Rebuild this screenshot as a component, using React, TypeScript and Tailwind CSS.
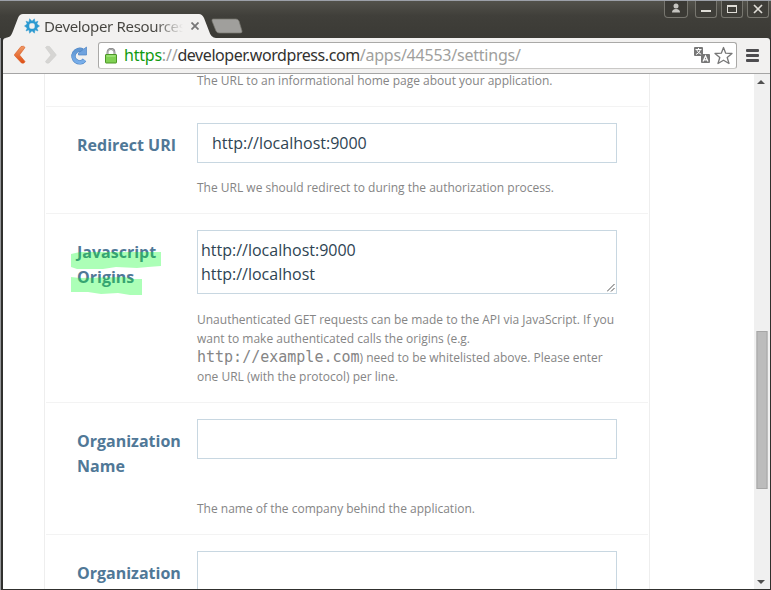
import type { ReactNode } from "react";

function WindowButton({ children }: { children: ReactNode }) {
  return (
    <div className="flex h-[17px] w-[22px] items-center justify-center rounded-b-[3px] border border-t-0 border-[#77766f] bg-[#3f3e39]">
      {children}
    </div>
  );
}

function TitleBar() {
  return (
    <header className="relative flex h-[38px] shrink-0 border-t border-[#9ca0a8] bg-linear-to-b from-[#53524b] via-[#403f3a] via-40% to-[#3b3a35]">
      <svg className="absolute left-0 top-0" width="250" height="37" viewBox="0 1 250 37">
        <path d="M3 38C10 38 11 36 13 31L18 18Q19.5 14 23 14H199Q202 14 204 18L209 31Q211 38 216 38Z" fill="#f2f1f0" />
        <path d="M213 19H236Q238 19 239 21L242 31Q242.500 33 240 33H219Q217 33 216 31L212 21Q211.500 19 213 19Z" fill="#a09f9c" stroke="#77766f" strokeWidth=".7" />
      </svg>
      <div className="relative mt-[12px] flex h-[25px] w-[212px] items-center pl-6">
        <svg className="shrink-0" width="16" height="16" viewBox="0 0 16 16">
          <path
            d="M8 3.200L10.400.8L11 4.200L14 3.200L12.800 6L15.500 8L12.800 10L14 13L11 11.800L10.400 15.200L8 12.800L5.600 15.200L5 11.800L2 13L3.200 10L.5 8L3.200 6L2 3.200L5 4.200L5.600.8Z"
            fill="#2c9ad1"
            stroke="#2c9ad1"
            strokeWidth=".5"
          />
          <rect x="5.300" y="5.300" width="5.400" height="5.400" rx="1.700" fill="#f2f1f0" />
        </svg>
        <span className="ml-[4px] w-[139px] overflow-hidden whitespace-nowrap bg-linear-to-r from-[#45443f] from-80% to-transparent bg-clip-text font-['Noto_Sans',sans-serif] text-[15px] leading-6 tracking-[-0.340px] text-transparent">
          Developer Resources
        </span>
        <svg className="ml-[8px] shrink-0" width="8" height="8" viewBox="0 0 8 8">
          <path d="M.5.5L7.500 7.500M7.500.5L.5 7.500" stroke="#777" strokeWidth="1.800" />
        </svg>
      </div>
      <div className="ml-auto mr-[2px] flex h-[17px]">
        <div className="mr-[7px] flex h-[17px] w-[24px] justify-center rounded-b-[4px] border border-t-0 border-[#77766f] bg-[#3b3a35]">
          <svg width="10" height="13" viewBox="0 0 10 13">
            <circle cx="5" cy="5" r="2.500" fill="#c5c4c0" />
            <path d="M1 11.500Q1 8 5 8T9 11.500Z" fill="#c5c4c0" />
          </svg>
        </div>
        <div className="flex gap-[4px]">
          <WindowButton>
            <div className="mt-[4px] h-[2px] w-[10px] bg-[#dfddd7]" />
          </WindowButton>
          <WindowButton>
            <div className="h-[8px] w-[10px] border border-t-2 border-[#dfddd7]" />
          </WindowButton>
          <WindowButton>
            <svg width="10" height="10" viewBox="0 0 10 10">
              <path d="M1 1L9 9M9 1L1 9" stroke="#dfddd7" strokeWidth="1.700" />
            </svg>
          </WindowButton>
        </div>
      </div>
    </header>
  );
}

function Toolbar() {
  return (
    <div className="ml-[3px] mr-px flex h-9 shrink-0 rounded-t-[3px] border-b border-[#a5a5a5] bg-[#f2f1f0]">
      <svg className="shrink-0" width="95" height="35" viewBox="3 38 95 35">
        <defs>
          <linearGradient id="orange" x1="0" y1="0" x2="0" y2="1">
            <stop stopColor="#ef9a66" />
            <stop offset="1" stopColor="#df4e14" />
          </linearGradient>
          <linearGradient id="blue" x1="0" y1="0" x2="0" y2="1">
            <stop stopColor="#6096d1" />
            <stop offset="1" stopColor="#78aeea" />
          </linearGradient>
        </defs>
        <path d="M21 46.500Q24 45.500 25 47.500L19.500 55L25 61.500Q24.500 64 21.500 63L14.500 55.500V54.500Z" fill="url(#orange)" stroke="#d9571d" strokeWidth=".6" />
        <path d="M49.500 46.500Q46.500 45.500 45.500 47.500L51 55L45.500 61.500Q46 64 49 63L56 55.500V54.500Z" fill="#d6d5d3" stroke="#c9c8c6" strokeWidth=".5" />
        <path d="M82.500 50.500A6.200 6.200 0 1 0 84.500 60" fill="none" stroke="#4d84c4" strokeWidth="4.500" />
        <path d="M82.500 50.500A6.200 6.200 0 1 0 84.500 60" fill="none" stroke="url(#blue)" strokeWidth="3.500" />
        <path d="M86.500 47V55H78.500V53Z" fill="#6fa3df" stroke="#4d84c4" strokeWidth=".7" />
      </svg>
      <div className="mt-[4px] flex h-[27px] w-[639px] items-center rounded-[3px] border border-[#aaa9a7] border-b-[#c9c8c6] bg-white">
        <svg className="ml-[6px] shrink-0" width="12" height="16" viewBox="0 0 12 16">
          <path d="M2.500 8V4.500Q2.500 1 6 1T9.500 4.500V8" fill="none" stroke="#777" strokeWidth="1.800" />
          <path d="M2.500 8V4.500Q2.500 1 6 1T9.500 4.500V8" fill="none" stroke="#ddd" strokeWidth=".6" />
          <rect x=".5" y="6.500" width="11" height="8.500" rx=".5" fill="#80d153" stroke="#4c9627" />
          <path d="M1.500 8H10.500" stroke="#b2ee91" />
        </svg>
        <span className="-mt-px ml-[7px] whitespace-nowrap font-['Noto_Sans',sans-serif] text-[16px] leading-6 tracking-[-0.220px] text-[#a09f9d]">
          <span className="text-[#109a10]">https</span>://<span className="tracking-[-0.430px] text-[#33322f]">developer.wordpress.com</span>/apps/44553/settings/
        </span>
        <svg className="ml-auto mr-[2px] shrink-0" width="40" height="20" viewBox="694 46 40 20">
          <rect x="694" y="47" width="9" height="9" rx="1" fill="#777" />
          <path d="M695.500 49.500H701.500M698.500 48V49.500M700.500 49.500Q699.500 53 696 54.500M696.500 49.500Q698 53 701.500 54.500" fill="none" stroke="#fff" />
          <rect x="701" y="54" width="9" height="9" rx="1" fill="#777" />
          <path d="M703 61.500L705.500 56L708 61.500M704 59.800H707" fill="none" stroke="#fff" strokeWidth="1.200" />
          <path d="M723.500 47.500L725.700 53.200L732 53.500L727.200 57.500L729 63.500L723.500 60.200L718 63.500L719.800 57.500L715 53.500L721.300 53.200Z" fill="#fff" stroke="#777" strokeWidth="1.300" strokeLinejoin="round" />
        </svg>
      </div>
      <div className="ml-[9px] mt-[11px] flex flex-col gap-[2px]">
        <div className="h-[3px] w-[13px] rounded-[1px] bg-[#4e4d50]" />
        <div className="h-[3px] w-[13px] rounded-[1px] bg-[#4e4d50]" />
        <div className="h-[3px] w-[13px] rounded-[1px] bg-[#4e4d50]" />
      </div>
    </div>
  );
}

function Field({ label, size, children }: { label: ReactNode; size: string; children?: ReactNode }) {
  return (
    <section className={`mx-px flex shrink-0 border-b border-[#f3f3f3] pl-[31px] pt-4 ${size}`}>
      <div className="relative w-[120px] shrink-0 whitespace-nowrap pt-[10px] text-[16px] font-bold leading-[25px] text-[#507897]">{label}</div>
      <div className="w-[420px]">{children}</div>
    </section>
  );
}

function Help({ className, children }: { className: string; children: ReactNode }) {
  return <p className={`whitespace-nowrap text-[12px] leading-[19px] text-[#858585] ${className}`}>{children}</p>;
}

function Scrollbar() {
  return (
    <aside className="flex w-4 shrink-0 flex-col items-center bg-[#f0f0f0]">
      <svg width="8" height="4" viewBox="0 0 8 4" className="mt-[6px] shrink-0 -translate-x-px">
        <path d="M0 4L4 0L8 4Z" fill="#505050" />
      </svg>
      <div className="mt-[247px] h-[158px] w-[11px] shrink-0 -translate-x-[0.500px] border border-[#a6a6a6] bg-[#bcbcbc]" />
      <svg width="8" height="4" viewBox="0 0 8 4" className="mb-[5px] mt-auto shrink-0 -translate-x-px">
        <path d="M0 0H8L4 4Z" fill="#505050" />
      </svg>
    </aside>
  );
}

export default function App() {
  return (
    <div className="flex h-[590px] w-[771px] flex-col overflow-hidden bg-[#30302e] font-['Open_Sans','Noto_Sans',sans-serif]">
      <TitleBar />
      <div className="flex min-h-0 flex-1 flex-col border-l border-[#96989b]">
        <div className="-ml-px flex min-h-0 flex-1 flex-col">
          <Toolbar />
          <div className="mb-px ml-[3px] mr-px flex min-h-0 flex-1 bg-white">
            <main className="min-w-0 flex-1 overflow-hidden pl-[41px]">
              <div className="flex h-full w-[606px] flex-col border-x border-[#eee]">
                <section className="mx-px h-[33px] shrink-0 border-b border-[#f3f3f3] pl-[151px]">
                  <Help className="-translate-y-[3px]">The URL to an informational home page about your application.</Help>
                </section>
                <Field label="Redirect URI" size="h-[107px]">
                  <div className="h-10 border border-[#c8d7e1] pl-[14px] text-[16px] leading-[38px] text-[#2e4453]">http://localhost:9000</div>
                  <Help className="mt-[15px]">The URL we should redirect to during the authorization process.</Help>
                </Field>
                <Field
                  size="h-[189px]"
                  label={
                    <>
                      Javascript<br />Origins
                      <svg className="absolute -left-[6px] top-0" width="92" height="70" viewBox="71 230 92 70">
                        <path d="M71 254L80 252H161V266L148 267L137 268L116 267L103 269H77L71 267Z" fill="#00ff21" fillOpacity=".325" />
                        <path d="M71 277L80 278L124 277L134 279H142V295H130L118 293L101 294L88 292L71 292Z" fill="#00ff21" fillOpacity=".325" />
                      </svg>
                    </>
                  }
                >
                  <div className="relative h-16 border border-[#c8d7e1] px-[3px] pt-[7px] text-[16px] leading-6 text-[#2e4453]">
                    http://localhost:9000<br />http://localhost
                    <svg className="absolute bottom-px right-px" width="8" height="8" viewBox="0 0 8 8">
                      <path d="M0 7.500L7.500 0M4 7.500L7.500 4" stroke="#555" strokeWidth="1" />
                    </svg>
                  </div>
                  <Help className="mt-[16px]">
                    Unauthenticated GET requests can be made to the API via JavaScript. If you<br />
                    want to make authenticated calls the origins (e.g.<br />
                    <code className="font-['DejaVu_Sans_Mono',monospace] text-[15px] leading-[15px]">http://example.com</code>) need to be whitelisted above. Please enter<br />
                    one URL (with the protocol) per line.
                  </Help>
                </Field>
                <Field label={<>Organization<br />Name</>} size="h-[132px]">
                  <div className="h-10 border border-[#c8d7e1]" />
                  <Help className="mt-[40px]">The name of the company behind the application.</Help>
                </Field>
                <Field label="Organization" size="h-[132px]">
                  <div className="h-10 border border-[#c8d7e1]" />
                </Field>
              </div>
            </main>
            <Scrollbar />
          </div>
        </div>
      </div>
    </div>
  );
}
